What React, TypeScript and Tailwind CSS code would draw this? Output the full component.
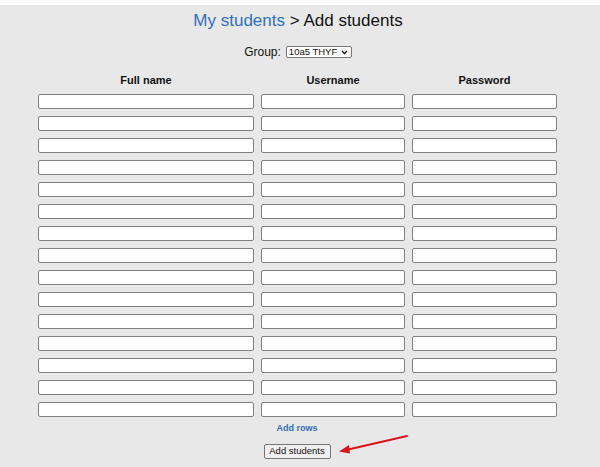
import React from "react";

const rows = Array.from({ length: 15 }, (_, i) => i);

export default function App() {
  return (
    <div className="w-[600px] h-[467px] bg-[#e8e8e8] overflow-hidden relative" style={{ fontFamily: '"Liberation Sans", Arial, sans-serif' }}>
      <div className="h-[5px] bg-white" />
      <div className="flex flex-col">
        <div className="pt-[6px] h-[30px] text-center text-[17px] leading-[20px] text-[#111] pr-[4px]">
          <span className="text-[#2f6fc2]">My students</span> &gt; Add students
        </div>
        <div className="flex justify-center items-center gap-[5px] mt-[10px] h-[14px] pr-[4px]">
          <span className="text-[12px] leading-[14px] text-[#111]">Group:</span>
          <div className="w-[66px] h-[12px] bg-white border border-[#767676] rounded-[2px] flex items-center justify-between pl-[2px] pr-[3px]">
            <span className="text-[9.5px] leading-[10px] text-[#111]">10a5 THYF</span>
            <svg width="7" height="5" viewBox="0 0 7 5"><path d="M1 1 L3.5 3.5 L6 1" stroke="#111" strokeWidth="1.3" fill="none" /></svg>
          </div>
        </div>
        <div className="pl-[38px] mt-[14px] flex flex-col">
          <div className="flex gap-[7px] h-[15px] items-center text-[11px] font-bold text-[#111]">
            <div className="w-[216px] text-center">Full name</div>
            <div className="w-[144px] text-center">Username</div>
            <div className="w-[145px] text-center">Password</div>
          </div>
          <div className="flex flex-col gap-[7px] mt-[6px]">
            {rows.map((r) => (
              <div key={r} className="flex gap-[7px]">
                <div className="w-[216px] h-[15px] bg-white border border-[#808080] rounded-[2px]" />
                <div className="w-[144px] h-[15px] bg-white border border-[#808080] rounded-[2px]" />
                <div className="w-[145px] h-[15px] bg-white border border-[#808080] rounded-[2px]" />
              </div>
            ))}
          </div>
        </div>
        <div className="flex justify-center mt-[5px]">
          <span className="text-[9px] leading-[12px] font-bold text-[#2f6fc2] mr-[6px]">Add rows</span>
        </div>
        <div className="flex justify-center mt-[10px]">
          <div className="w-[67px] h-[15px] bg-[#efefef] border border-[#767676] rounded-[2px] flex items-center justify-center text-[9.5px] text-[#111] mr-[6px]">
            Add students
          </div>
        </div>
      </div>
      <svg className="absolute left-0 top-0" width="600" height="467" viewBox="0 0 600 467">
        <line x1="407" y1="436" x2="346" y2="450" stroke="#d8141c" strokeWidth="2" strokeLinecap="round" />
        <path d="M339 451.5 L349 445 L350 453.5 Z" fill="#d8141c" />
      </svg>
    </div>
  );
}
